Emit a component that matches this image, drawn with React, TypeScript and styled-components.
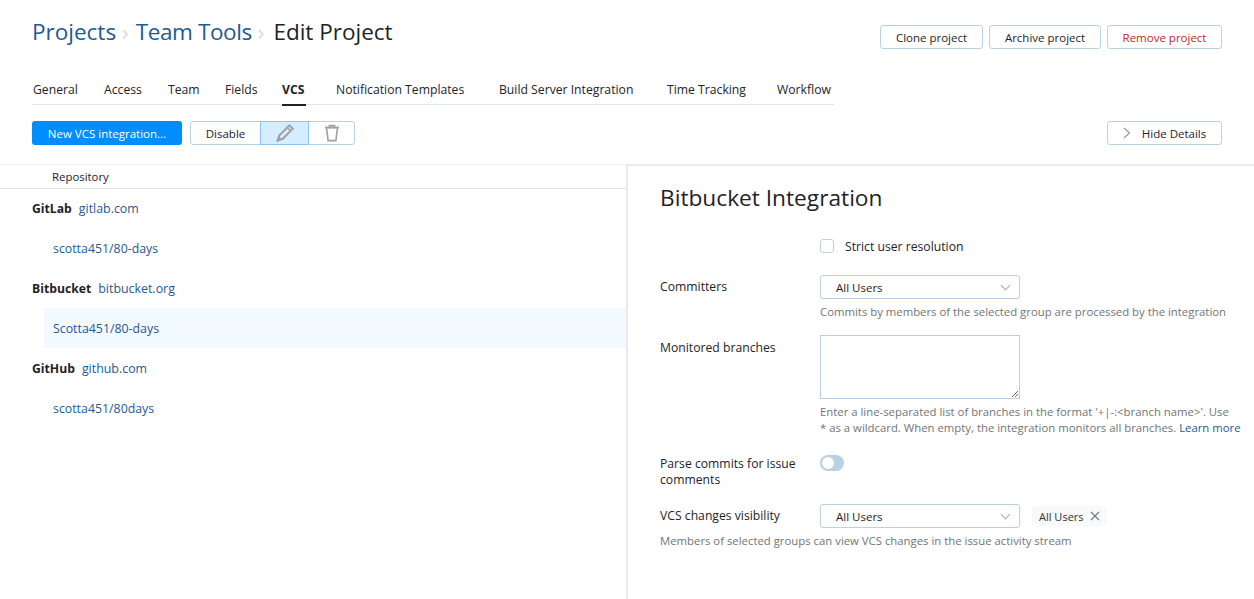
import styled, { createGlobalStyle } from "styled-components";

const tabs = [
  { label: "General", width: 71 },
  { label: "Access", width: 64 },
  { label: "Team", width: 57 },
  { label: "Fields", width: 57 },
  { label: "VCS", width: 54, active: true },
  { label: "Notification Templates", width: 163 },
  { label: "Build Server Integration", width: 168 },
  { label: "Time Tracking", width: 110 },
  { label: "Workflow", width: 55 },
];

const groups = [
  { name: "GitLab", host: "gitlab.com", repo: "scotta451/80-days" },
  { name: "Bitbucket", host: "bitbucket.org", repo: "Scotta451/80-days", selected: true },
  { name: "GitHub", host: "github.com", repo: "scotta451/80days" },
];

const App = () => {
  return (
    <Page>
      <GlobalStyle />
      <Header>
        <Breadcrumbs>
          <Crumb>Projects</Crumb>
          <Separator>›</Separator>
          <TightCrumb>Team Tools</TightCrumb>
          <Separator>›</Separator>
          <Current>Edit Project</Current>
        </Breadcrumbs>
        <HeaderActions>
          <Button $width={103}>Clone project</Button>
          <Button $width={112}>Archive project</Button>
          <Button $width={115} $danger>
            Remove project
          </Button>
        </HeaderActions>
      </Header>

      <Tabs>
        {tabs.map((tab) => (
          <Tab key={tab.label} $width={tab.width} $active={tab.active}>
            {tab.label}
          </Tab>
        ))}
      </Tabs>

      <Toolbar>
        <PrimaryButton>New VCS integration...</PrimaryButton>
        <ButtonGroup>
          <GroupButton $width={71}>Disable</GroupButton>
          <GroupButton $width={49} $active>
            <svg width="20" height="20" viewBox="0 0 20 20" fill="none" stroke="#a0a0a0" strokeWidth="2">
              <path d="M14.4 2.4l3.4 3.2L7.8 15.8 2.6 17.6l1.6-5z" />
              <path d="M12.2 4.6l3.4 3.2" strokeWidth="1.4" />
              <path d="M3.4 14.6l2 2" strokeWidth="2.6" />
            </svg>
          </GroupButton>
          <GroupButton $width={47}>
            <svg width="18" height="20" viewBox="0 0 18 20" fill="none" stroke="#a0a0a0" strokeWidth="1.6">
              <path d="M2 4.6h14" strokeWidth="2" />
              <path d="M6.4 4V2.6h5.2V4" />
              <path d="M3.6 5.4l1.5 12.2h7.8l1.5-12.2" />
            </svg>
          </GroupButton>
        </ButtonGroup>
        <Spacer />
        <Button $width={115}>
          <DetailsChevron width="16" height="14" viewBox="0 0 16 14" fill="none" stroke="#999" strokeWidth="1.2">
            <path d="M5 2l5.5 5L5 12" />
          </DetailsChevron>
          Hide Details
        </Button>
      </Toolbar>

      <Split>
        <ListPane>
          <ListHead>Repository</ListHead>
          {groups.map((group) => (
            <div key={group.name}>
              <GroupRow>
                <GroupName>{group.name}</GroupName>
                <GroupHost>{group.host}</GroupHost>
              </GroupRow>
              <RepoRow $selected={group.selected}>{group.repo}</RepoRow>
            </div>
          ))}
        </ListPane>

        <DetailsPane>
          <PanelTitle>Bitbucket Integration</PanelTitle>
          <CheckRow>
            <Checkbox />
            <CheckLabel>Strict user resolution</CheckLabel>
          </CheckRow>

          <FormRow $top={21}>
            <FieldLabel>Committers</FieldLabel>
            <Field>
              <Select>
                All Users
                <Chevron />
              </Select>
              <Help>Commits by members of the selected group are processed by the integration</Help>
            </Field>
          </FormRow>

          <FormRow $top={15}>
            <FieldLabel $offset={1}>Monitored branches</FieldLabel>
            <Field>
              <TextArea />
              <Help>
                Enter a line-separated list of branches in the format '+|-:&lt;branch name&gt;'. Use
                <br />* as a wildcard. When empty, the integration monitors all branches.{" "}
                <HelpLink>Learn more</HelpLink>
              </Help>
            </Field>
          </FormRow>

          <FormRow $top={19}>
            <ToggleLabel>Parse commits for issue comments</ToggleLabel>
            <Toggle>
              <ToggleKnob />
            </Toggle>
          </FormRow>

          <FormRow $top={16}>
            <FieldLabel>VCS changes visibility</FieldLabel>
            <Field>
              <SelectLine>
                <Select>
                  All Users
                  <Chevron />
                </Select>
                <Tag>
                  All Users
                  <svg width="10" height="10" viewBox="0 0 10 10" stroke="#777" strokeWidth="1.1">
                    <path d="M1 1l8 8M9 1l-8 8" />
                  </svg>
                </Tag>
              </SelectLine>
            </Field>
          </FormRow>
          <Help>Members of selected groups can view VCS changes in the issue activity stream</Help>
        </DetailsPane>
      </Split>
    </Page>
  );
};

export default App;

const GlobalStyle = createGlobalStyle`
  html, body {
    margin: 0;
    padding: 0;
    height: 100%;
    background: #fff;
    overflow: hidden;
  }
  body {
    font-family: "Open Sans", "Noto Sans", sans-serif;
    font-size: 12.2px;
    color: #1f2326;
  }
`;

const Page = styled.div`
  width: 1254px;
  height: 599px;
  overflow: hidden;
`;

const Header = styled.header`
  display: flex;
  justify-content: space-between;
  padding: 13px 32px 0;
  height: 66px;
  box-sizing: border-box;
`;

const Breadcrumbs = styled.div`
  display: flex;
  align-items: center;
  height: 36px;
  font-size: 22.5px;
  gap: 6px;
`;

const Crumb = styled.span`
  color: #1f5a92;
`;

const TightCrumb = styled(Crumb)`
  margin-left: 1px;
  letter-spacing: -0.4px;
`;

const Current = styled.span`
  margin-left: 3px;
  color: #1f2326;
`;

const Separator = styled.span`
  color: #d4d7d9;
  font-size: 22px;
`;

const HeaderActions = styled.div`
  display: flex;
  gap: 6px;
  padding-top: 12px;
`;

const Button = styled.button<{ $width: number; $danger?: boolean }>`
  display: flex;
  align-items: center;
  justify-content: center;
  width: ${({ $width }) => $width}px;
  height: 24px;
  padding: 0;
  background: #fff;
  border: 1px solid #b8d1e5;
  border-radius: 3px;
  font: inherit;
  font-size: 11.5px;
  color: ${({ $danger }) => ($danger ? "#c22731" : "#1f2326")};
`;

const DetailsChevron = styled.svg`
  margin-right: 7px;
  margin-left: -4px;
`;

const Tabs = styled.nav`
  display: flex;
  width: 802px;
  height: 39px;
  margin-left: 32px;
  border-bottom: 1px solid #dfe5eb;
  box-sizing: border-box;
`;

const Tab = styled.div<{ $width: number; $active?: boolean }>`
  width: ${({ $width }) => $width}px;
  height: 39px;
  box-sizing: border-box;
  padding: 15px 0 0 1px;
  line-height: 17px;
  white-space: nowrap;
  font-weight: ${({ $active }) => ($active ? 700 : 400)};
  position: relative;
  &::after {
    content: "";
    display: ${({ $active }) => ($active ? "block" : "none")};
    position: absolute;
    left: 1px;
    bottom: -1px;
    width: 24px;
    height: 2px;
    background: #1f2326;
  }
`;

const Toolbar = styled.div`
  display: flex;
  align-items: center;
  gap: 8px;
  height: 24px;
  padding: 16px 32px 0;
`;

const Spacer = styled.div`
  flex: 1;
`;

const PrimaryButton = styled.button`
  width: 150px;
  height: 24px;
  padding: 0;
  background: #008eff;
  border: 0;
  border-radius: 3px;
  color: #fff;
  font: inherit;
  font-size: 11.5px;
`;

const ButtonGroup = styled.div`
  display: flex;
  height: 24px;
`;

const GroupButton = styled.button<{ $width: number; $active?: boolean }>`
  display: flex;
  align-items: center;
  justify-content: center;
  width: ${({ $width }) => $width}px;
  height: 24px;
  padding: 0;
  margin-left: -1px;
  font: inherit;
  font-size: 11.5px;
  color: #1f2326;
  border: 1px solid ${({ $active }) => ($active ? "#8ec5f0" : "#b8d1e5")};
  background: ${({ $active }) => ($active ? "#d4edff" : "#fff")};
  position: relative;
  z-index: ${({ $active }) => ($active ? 1 : 0)};
  &:first-child {
    margin-left: 0;
    border-radius: 3px 0 0 3px;
  }
  &:last-child {
    border-radius: 0 3px 3px 0;
  }
`;

const Split = styled.main`
  display: flex;
  margin-top: 19px;
  height: 445px;
`;

const ListPane = styled.section`
  width: 626px;
  flex: none;
  border-top: 1px solid #f3f5f7;
`;

const ListHead = styled.div`
  height: 24px;
  margin-bottom: -1px;
  box-sizing: border-box;
  padding: 4px 0 0 52px;
  font-size: 11.4px;
  line-height: 16px;
  border-bottom: 1px solid #dfe5eb;
`;

const GroupRow = styled.div`
  display: flex;
  align-items: center;
  gap: 7px;
  height: 40px;
  padding-left: 32px;
`;

const GroupName = styled.span`
  font-weight: 700;
`;

const GroupHost = styled.span`
  color: #1f5a92;
  font-size: 12.4px;
`;

const RepoRow = styled.div<{ $selected?: boolean }>`
  display: flex;
  align-items: center;
  height: 40px;
  margin-left: 44px;
  padding-left: 9px;
  color: #1f5a92;
  font-size: 12.35px;
  background: ${({ $selected }) => ($selected ? "#f2f9ff" : "transparent")};
`;

const DetailsPane = styled.aside`
  flex: 1;
  box-sizing: border-box;
  background: #fff;
  margin: 2px -6px 0 2px;
  box-shadow: -1px -1px 0 #e3e8ee, -2px -2px 1px #eaeef2;
  padding: 14px 0 0 32px;
`;

const PanelTitle = styled.h2`
  margin: 0;
  font-size: 22.7px;
  font-weight: 400;
  line-height: 36px;
`;

const CheckRow = styled.label`
  display: flex;
  align-items: center;
  height: 16px;
  margin: 22px 0 0 160px;
`;

const Checkbox = styled.span`
  width: 12px;
  height: 12px;
  border: 1px solid #b8d1e5;
  border-radius: 3px;
`;

const CheckLabel = styled.span`
  margin-left: 11px;
`;

const FormRow = styled.div<{ $top: number }>`
  display: flex;
  margin-top: ${({ $top }) => $top}px;
`;

const FieldLabel = styled.div<{ $offset?: number }>`
  width: 160px;
  flex: none;
  padding-top: ${({ $offset }) => $offset ?? 0}px;
  line-height: 24px;
`;

const ToggleLabel = styled.div`
  width: 150px;
  margin-right: 10px;
  padding-top: 1px;
  flex: none;
  line-height: 16px;
`;

const Field = styled.div`
  flex: 1;
`;

const Select = styled.div`
  display: flex;
  align-items: center;
  justify-content: space-between;
  width: 200px;
  height: 24px;
  box-sizing: border-box;
  padding: 0 9px 0 15px;
  border: 1px solid #b8d1e5;
  border-radius: 3px;
  font-size: 11.5px;
`;

const Chevron = styled.span`
  width: 6px;
  height: 6px;
  margin: -3px 1px 0 0;
  border-right: 1px solid #aaa;
  border-bottom: 1px solid #aaa;
  transform: rotate(45deg);
`;

const Help = styled.div`
  margin-top: 5px;
  font-size: 11.35px;
  line-height: 16px;
  color: #737577;
  white-space: nowrap;
`;

const HelpLink = styled.span`
  color: #1f5a92;
`;

const TextArea = styled.div`
  width: 200px;
  height: 64px;
  box-sizing: border-box;
  border: 1px solid #b8d1e5;
  background:
    linear-gradient(135deg, transparent 0 66%, #666 66% 73%, transparent 73% 83%, #666 83% 90%, transparent 90%)
    bottom 1px right 1px / 10px 10px no-repeat;
`;

const Toggle = styled.div`
  display: flex;
  align-items: center;
  width: 24px;
  height: 16px;
  box-sizing: border-box;
  padding: 2px;
  border-radius: 8px;
  background: #b8d1e5;
`;

const ToggleKnob = styled.span`
  width: 12px;
  height: 12px;
  border-radius: 50%;
  background: #fff;
`;

const SelectLine = styled.div`
  display: flex;
  align-items: center;
  gap: 12px;
`;

const Tag = styled.div`
  display: flex;
  align-items: center;
  gap: 6px;
  height: 20px;
  padding: 0 7px;
  border-radius: 3px;
  background: #f7f9fa;
  color: #333;
  font-size: 11px;
`;
